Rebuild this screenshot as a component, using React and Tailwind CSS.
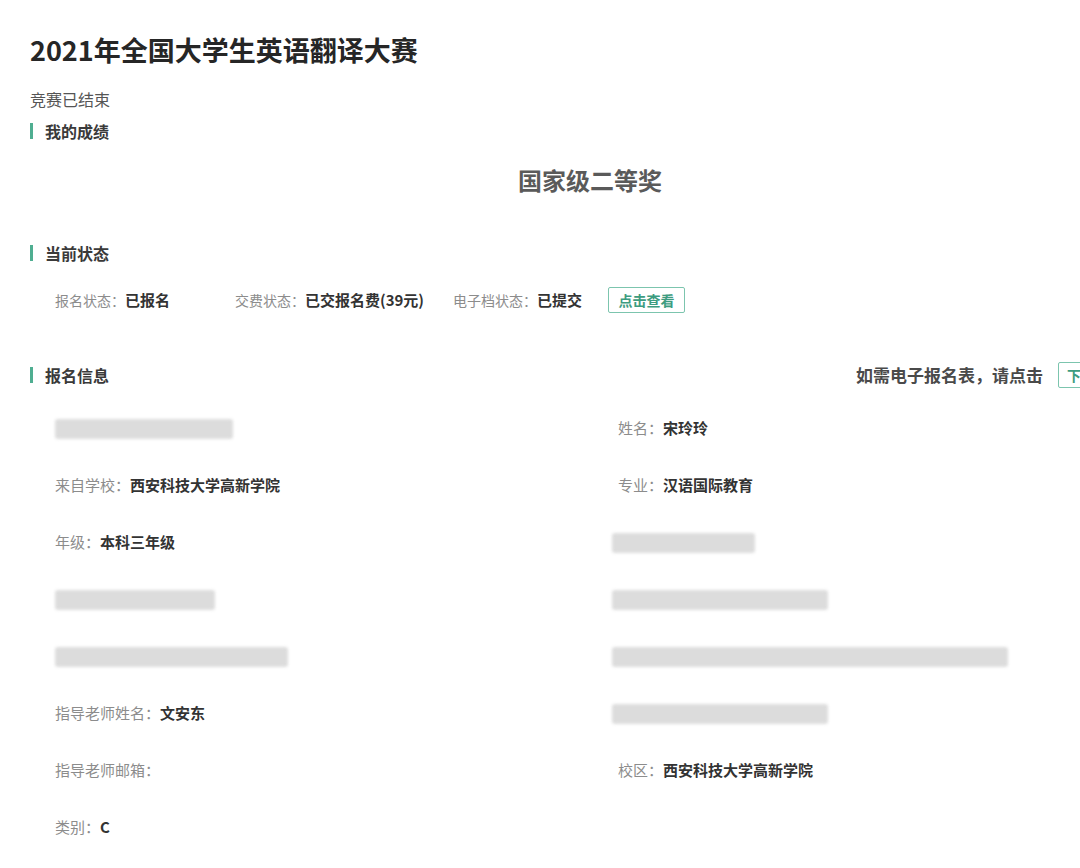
import React from "react";

const font = { fontFamily: '"Noto Sans CJK SC", "Noto Sans", sans-serif' };

function SectionTitle({ children, className = "" }) {
  return (
    <div className={`flex items-center h-[24px] ${className}`}>
      <span className="w-[3px] h-[16px] bg-[#4fae91] mr-[12px]" />
      <span className="text-[16px] font-bold text-[#3a3a3a]">{children}</span>
    </div>
  );
}

function Blur({ w }) {
  return (
    <div
      className="h-[20px] rounded-[3px] bg-[#d9d9d9] blur-[1.5px] opacity-90"
      style={{ width: w }}
    />
  );
}

function Field({ label, value, blur }) {
  return (
    <div className="h-[57px] flex items-center text-[15px]">
      {blur ? (
        <Blur w={blur} />
      ) : label ? (
        <>
          <span className="text-[#8c8c8c]">{label}：</span>
          <span className="text-[#333] font-semibold">{value}</span>
        </>
      ) : null}
    </div>
  );
}

const left = [
  { blur: 178 },
  { label: "来自学校", value: "西安科技大学高新学院" },
  { label: "年级", value: "本科三年级" },
  { blur: 160 },
  { blur: 233 },
  { label: "指导老师姓名", value: "文安东" },
  { label: "指导老师邮箱", value: "" },
  { label: "类别", value: "C" },
];

const right = [
  { label: "姓名", value: "宋玲玲" },
  { label: "专业", value: "汉语国际教育" },
  { blur: 143 },
  { blur: 216 },
  { blur: 396 },
  { blur: 216 },
  { label: "校区", value: "西安科技大学高新学院" },
  {},
];

export default function App() {
  return (
    <div className="w-[1080px] h-[868px] overflow-hidden bg-white" style={font}>
      <div className="w-[1116px] ml-[30px] pt-[32px]">
        <h1 className="text-[27px] leading-[36px] font-bold text-[#262626]">
          2021年全国大学生英语翻译大赛
        </h1>
        <div className="mt-[19px] text-[16px] leading-[24px] text-[#555]">竞赛已结束</div>
        <SectionTitle className="mt-[8px]">我的成绩</SectionTitle>
        <div className="mt-[21px] pl-[4px] text-center text-[24px] leading-[32px] font-bold text-[#5a5a5a]">
          国家级二等奖
        </div>

        <SectionTitle className="mt-[45px]">当前状态</SectionTitle>
        <div className="mt-[22px] pl-[25px] flex items-center h-[26px] text-[14px]">
          <div className="w-[180px]">
            <span className="text-[#8c8c8c]">报名状态：</span>
            <span className="text-[#333] text-[15px] font-semibold">已报名</span>
          </div>
          <div className="w-[218px]">
            <span className="text-[#8c8c8c]">交费状态：</span>
            <span className="text-[#333] text-[15px] font-semibold">已交报名费(39元)</span>
          </div>
          <div className="mr-[26px]">
            <span className="text-[#8c8c8c]">电子档状态：</span>
            <span className="text-[#333] text-[15px] font-semibold">已提交</span>
          </div>
          <button className="h-[26px] w-[77px] border border-[#7cc5ae] rounded-[2px] text-[#3d9c80] text-[14px] font-semibold bg-white">
            点击查看
          </button>
        </div>

        <div className="mt-[49px] flex items-center justify-between">
          <SectionTitle>报名信息</SectionTitle>
          <div className="flex items-center">
            <span className="text-[17px] font-semibold text-[#4a4a4a]">如需电子报名表，请点击</span>
            <button className="ml-[15px] h-[26px] px-[8px] border border-[#7cc5ae] rounded-[2px] text-[#3d9c80] text-[14px] font-semibold bg-white">
              下载报名表
            </button>
          </div>
        </div>

        <div className="mt-[12px] pl-[25px] grid grid-cols-[557px_1fr]">
          <div>
            {left.map((f, i) => (
              <Field key={i} {...f} />
            ))}
          </div>
          <div>
            {right.map((f, i) => (
              <div key={i} className={f.blur ? "" : "pl-[6px]"}>
                <Field {...f} />
              </div>
            ))}
          </div>
        </div>
      </div>
    </div>
  );
}
